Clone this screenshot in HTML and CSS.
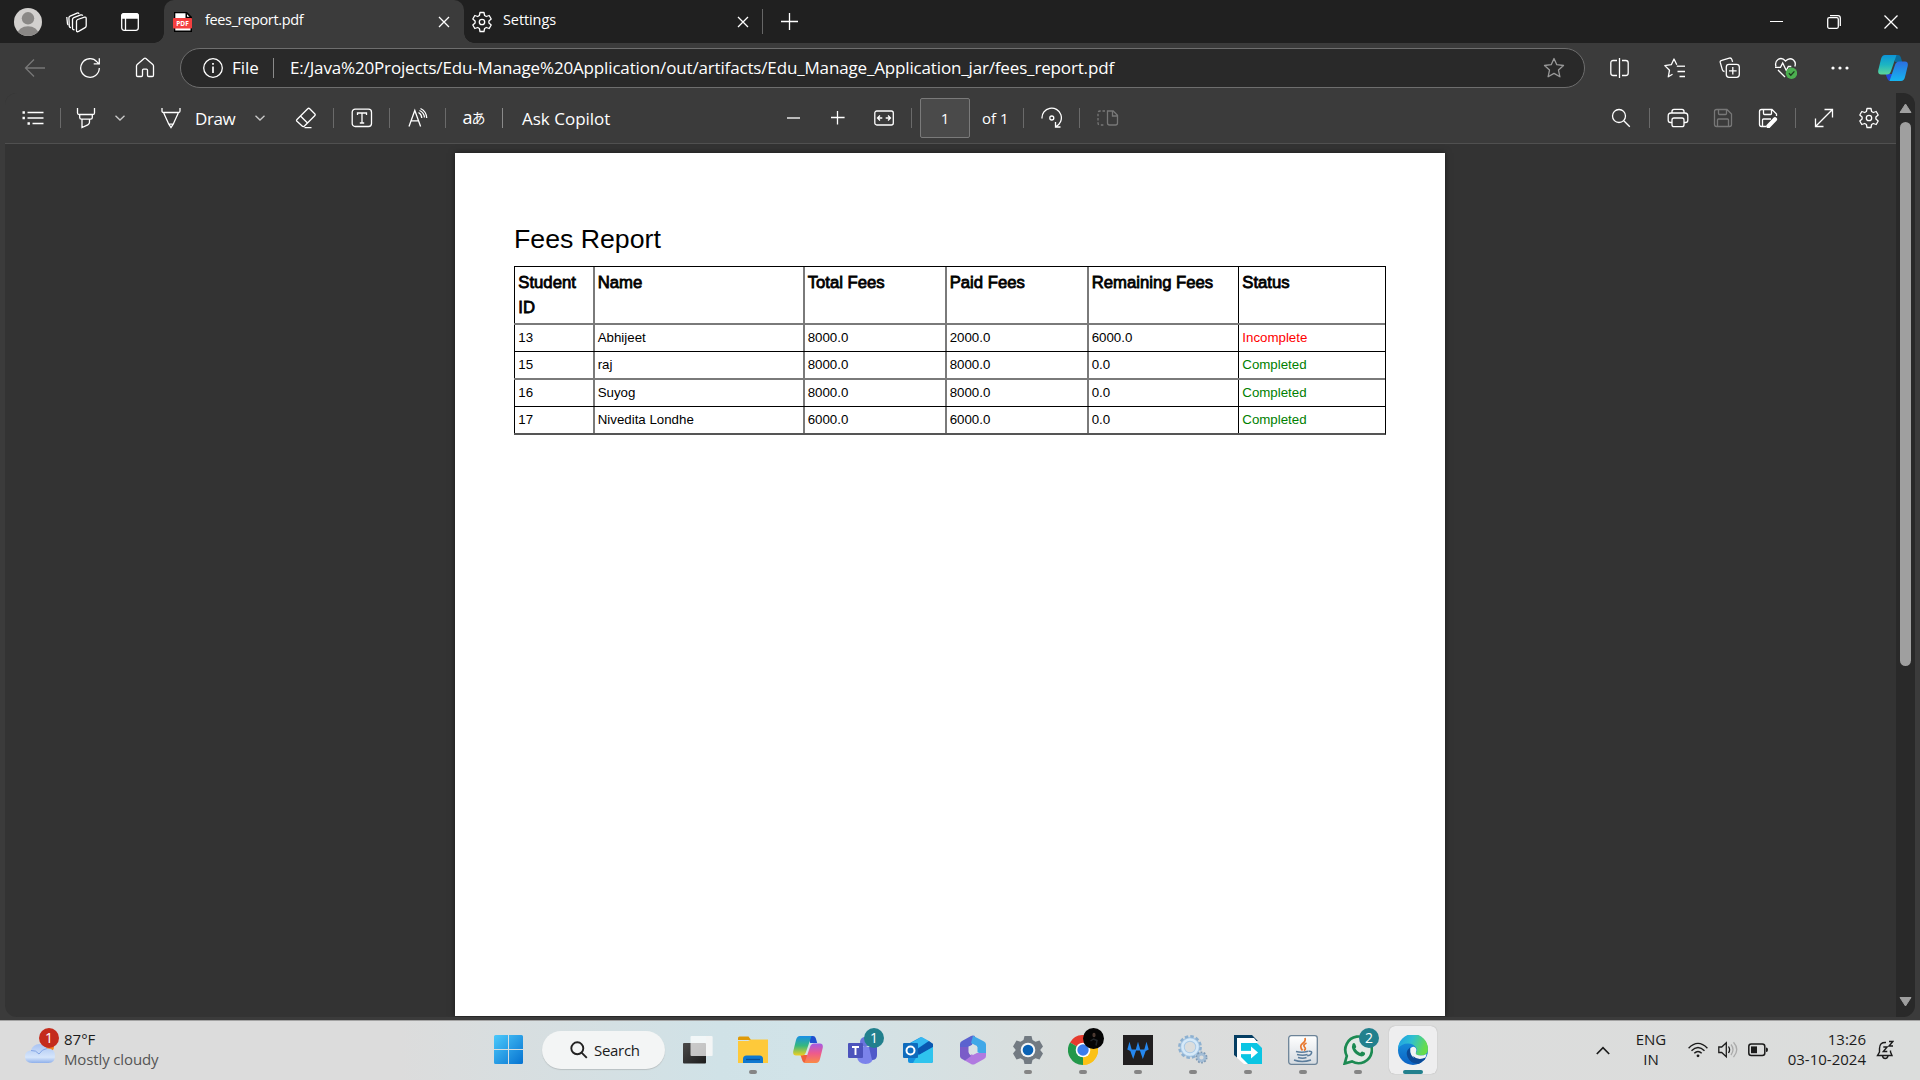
FILE: index.html
```html
<!DOCTYPE html>
<html lang="en">
<head>
<meta charset="utf-8">
<title>fees_report.pdf</title>
<link rel="stylesheet" href="styles.css">
</head>
<body>
<div class="desktop">
  <div class="browser">
    <header class="tabbar">
      <span class="cell"><svg width="28" height="28" viewBox="0 0 28 28"><clipPath id="av"><circle cx="14" cy="14" r="14"/></clipPath><g clip-path="url(#av)"><rect width="28" height="28" fill="#d2d0ce"/><circle cx="14" cy="10.3" r="6.2" fill="#8a8886"/><ellipse cx="14" cy="26" rx="10.5" ry="7.8" fill="#8a8886"/></g></svg></span>
      <span class="cell"><svg class="ico" width="22" height="22" viewBox="0 0 22 22"><path d="M10.500 10.300q0-1.300 1.200-1.800l6.800-2.300q1.700-.5 1.700 1.200v7.400q0 1.200-1.100 1.800l-6.500 3.800q-2.100 1-2.100-1z"/><path d="M8.500 18.700q-1.800.3-2-1.500V8.600q0-1.400 1.300-1.900l7-2.800q1.300-.4 2 .8M5 16.500q-1.500.2-1.700-1.200L2.900 6.900q0-1.300 1.200-1.800l7-3q1.300-.5 2 .7"/><path d="M2.500 14q-.8-.3-1-1.200L.8 6"/></svg></span>
      <span class="cell"><svg class="ico" width="20" height="20" viewBox="0 0 20 20"><rect x="1.700" y="1.700" width="16.600" height="16.600" rx="2.500"/><path d="M1.700 6V4q0-2.300 2.300-2.300h12q2.300 0 2.300 2.300v2z" fill="#fff"/><path d="M5.500 6v12"/></svg></span>
      <div class="tab tab-active">
        <svg class="tab-icon" width="20" height="20" viewBox="0 0 20 20"><path d="M1 0h13l5 5v15H1z" fill="#000"/><path d="M2.300 1.300h11L17.500 5.500v13H2.300z" fill="#fff"/><path d="M12.500 0 19 6h-6.500z" fill="#000"/><path d="m14 2.200 2.500 2.500H14z" fill="#fff"/><rect y="6" width="19" height="10.500" rx=".8" fill="#f43f3f"/><text x="9.500" y="13.900" class="pdf-label" text-anchor="middle">PDF</text></svg>
        <span class="tab-title t-file">fees_report.pdf</span>
        <svg class="ico tab-close" width="12" height="12" viewBox="0 0 12 12"><path d="m1 1 10 10M11 1 1 11"/></svg>
      </div>
      <div class="tab">
        <svg class="ico tab-icon" width="22" height="22" viewBox="0 0 22 22"><path d="M9 1.500h4l.6 3 1.700 1 2.900-1 2 3.500-2.300 2v2l2.300 2-2 3.500-2.900-1-1.700 1-.6 3H9l-.6-3-1.700-1-2.900 1-2-3.500 2.300-2v-2l-2.300-2 2-3.500 2.900 1 1.700-1z" stroke-linejoin="round"/><circle cx="11" cy="11" r="2.700"/></svg>
        <span class="tab-title t-settings">Settings</span>
        <svg class="ico tab-close" width="12" height="12" viewBox="0 0 12 12"><path d="m1 1 10 10M11 1 1 11"/></svg>
      </div>
      <span class="tab-sep"></span>
      <span class="cell"><svg class="ico" width="18" height="18" viewBox="0 0 18 18"><path d="M8.500 0v17M0 8.500h17"/></svg></span>
      <span></span>
      <span class="cell"><svg class="ico crisp" width="14" height="14" viewBox="0 0 14 14"><path d="M0 6.500h13"/></svg></span>
      <span class="cell"><svg class="ico" width="14" height="14" viewBox="0 0 14 14"><rect x=".7" y="2.700" width="10.600" height="10.600" rx="1.500"/><path d="M3 .7h8q2.300 0 2.300 2.300v8"/></svg></span>
      <span class="cell"><svg class="ico" width="14" height="14" viewBox="0 0 14 14"><path d="m.5.500 13 13M13.500.5l-13 13"/></svg></span>
    </header>

    <nav class="navbar">
      <span class="cell"><svg class="ico dim" width="22" height="20" viewBox="0 0 22 20"><path d="M21 10H1.500M10 1.500 1.500 10l8.500 8.500"/></svg></span>
      <span class="cell"><svg class="ico" width="22" height="22" viewBox="0 0 22 22"><path d="M20.300 11A9.300 9.300 0 1 1 18 4.900l2 2M20.300 1.300v5.600h-5.600"/></svg></span>
      <span class="cell"><svg class="ico" width="20" height="21" viewBox="0 0 20 21"><path d="M1.500 9q0-.9.700-1.500l6.900-6q.9-.8 1.800 0l6.900 6q.7.600.7 1.500v9.300q0 1.200-1.200 1.200h-3.600q-1.200 0-1.200-1.200v-5.100q0-1-1-1H8.500q-1 0-1 1v5.100q0 1.200-1.200 1.200H2.700q-1.200 0-1.200-1.200z"/></svg></span>
      <span></span>
      <div class="address">
        <svg class="ico" width="20" height="20" viewBox="0 0 20 20"><circle cx="10" cy="10" r="9.300"/><path d="M10 8.500V15M10 5v1.700" stroke-width="1.700"/></svg>
        <span class="url-kind">File</span>
        <span class="url-sep"></span>
        <span class="url">E:/Java%20Projects/Edu-Manage%20Application/out/artifacts/Edu_Manage_Application_jar/fees_report.pdf</span>
        <svg class="ico star" width="22" height="22" viewBox="0 0 22 22"><path d="m11 1.500 2.800 6.200 6.700.8-5 4.600 1.400 6.700-5.900-3.400-5.900 3.400 1.400-6.700-5-4.600 6.700-.8z" stroke-linejoin="round"/></svg>
      </div>
      <span></span>
      <span class="cell"><svg class="ico" width="20" height="20" viewBox="0 0 20 20"><path d="M9.500 0v20M7 2.500H3.200Q.8 2.500.8 5v10q0 2.500 2.400 2.500H7M12 2.500h3.800q2.400 0 2.400 2.500v10q0 2.500-2.400 2.500H12"/></svg></span>
      <span class="cell"><svg class="ico" width="22" height="22" viewBox="0 0 22 22"><path d="m8.500 17.200-4.200 2.600 1.200-6.600L.8 8.600l6.500-.9L10 2l2.800 5.700M13.500 14.500h7.500M15.500 19.500H21" stroke-linejoin="round"/><path d="M12.800 9.200H21"/></svg></span>
      <span class="cell"><svg class="ico" width="22" height="22" viewBox="0 0 22 22"><path d="M5.500 14.500q-1.700 0-2.100-1.600L1.300 5.700q-.5-1.900 1.400-2.400l7.600-2.200q1.900-.5 2.500 1.300l.8 2.500"/><rect x="7.300" y="7.300" width="13" height="13" rx="2.700"/><path d="M13.800 10v7.600M10 13.800h7.600"/></svg></span>
      <span class="cell"><svg class="ico" width="24" height="24" viewBox="0 0 24 24"><path d="M3 10.500Q1.500 6 5 3.500q4-2.500 7.500 1.500Q16.500 1 20.500 4q2.800 2.700 1.300 6.500M2 11.300h5.500L9.700 7l3.600 7.500 2-4h3M5 14l7 7"/><circle cx="18.500" cy="17.200" r="5.700" fill="#4caf50" stroke="none"/><path d="m15.900 17.300 1.900 1.900 3.600-3.800" stroke="#1d3a1e"/></svg></span>
      <span class="cell"><svg width="18" height="6" viewBox="0 0 18 6" fill="#fff"><circle cx="2" cy="3" r="1.600"/><circle cx="9" cy="3" r="1.600"/><circle cx="16" cy="3" r="1.600"/></svg></span>
      <span class="cell"><svg width="30" height="28" viewBox="0 0 30 28"><defs><linearGradient id="c1" x1="0" y1="0" x2="0" y2="1"><stop offset="0" stop-color="#0c94d8"/><stop offset=".5" stop-color="#1cb5c2"/><stop offset="1" stop-color="#5ed69a"/></linearGradient><linearGradient id="c2" x1="0" y1="0" x2="0" y2="1"><stop offset="0" stop-color="#2b6fe0"/><stop offset="1" stop-color="#16b5f0"/></linearGradient></defs><path d="M15 1h5q2 0 2.700 2l1.500 5h-7z" fill="#0a6b9c"/><path d="M7.500 20h7l3 7h-5q-2.300 0-3-2z" fill="#2347d9"/><path d="M7 1h11.500L13 17q-1 3.500-4 3.500H3Q-.5 20.500.3 16L3 5q1-4 4-4z" fill="url(#c1)"/><path d="M23 27H11.500L17 11q1-3.500 4-3.500h6q3.500 0 2.700 4.500L27 23q-1 4-4 4z" fill="url(#c2)"/></svg></span>
    </nav>

    <main class="viewer">
      <div class="viewer-main">
        <div class="toolbar">
          <span class="cell"><svg class="ico" width="22" height="16" viewBox="0 0 22 16"><path d="M5.500 2.500h16M5.500 8h16M10.500 13.500h11"/><path d="M.5 2.500h2.400M.5 8h2.400M5.500 13.500h2.400" stroke-width="2.400"/></svg></span>
          <i class="sep"></i>
          <span class="cell"><svg class="ico" width="20" height="22" viewBox="0 0 20 22"><path d="M1.500 1v5q0 1.500 1.500 1.500h14q1.500 0 1.500-1.500V1M3.700 7.500v3q0 1.700 1.700 1.700h9.200q1.700 0 1.700-1.700v-3M6 12.300v8.200l5.800-2.700q1.700-.8 1.700-2.500v-3"/></svg></span>
          <span class="cell"><svg class="ico thin" width="10" height="6" viewBox="0 0 10 6"><path d="m.5.700 4.500 4.300L9.500.7"/></svg></span>
          <span></span>
          <span class="cell"><svg class="ico" width="22" height="22" viewBox="0 0 22 22"><path d="M2 1v3q0 1.500 1.500 1.500h15Q20 5.500 20 4V1M3.500 5.500l5.300 11.700L11 20.500l2.200-3.300 5.300-11.700M8.800 17.200h4.400"/></svg></span>
          <span class="tb-text t-draw">Draw</span>
          <span class="cell"><svg class="ico thin" width="10" height="6" viewBox="0 0 10 6"><path d="m.5.700 4.500 4.300L9.500.7"/></svg></span>
          <span></span>
          <span class="cell"><svg class="ico" width="22" height="22" viewBox="0 0 22 22"><path d="m2 12.500 10.700-10.700q1-1 2 0l5 5q1 1 0 2L9.500 19q-1.200 1.200-2.400 0L2 14.300q-.9-.9 0-1.800zM5.500 9l7 7M9.500 20.700h7"/></svg></span>
          <i class="sep"></i>
          <span class="cell"><svg class="ico" width="22" height="20" viewBox="0 0 22 20"><rect x="1.200" y="1.200" width="19.300" height="17.300" rx="3"/><path d="M6.500 7V5h9v2M11 5v10M8.800 15h4.400"/></svg></span>
          <i class="sep"></i>
          <span class="cell"><svg class="ico" width="22" height="22" viewBox="0 0 22 22"><path d="m2 19.500 5.800-16 5.800 16M4.300 13.800h7M11.500 5.500q3 1.500 3.300 5.500M13.500 1.500q6 3 6.200 9.500M12.500 3.500q4.500 2 5 7"/></svg></span>
          <i class="sep"></i>
          <span class="cell translate"><span>a</span><span class="kana">あ</span></span>
          <i class="sep strong"></i>
          <span></span>
          <span class="tb-text t-ask">Ask Copilot</span>
          <span class="cell"><svg class="ico crisp" width="14" height="14" viewBox="0 0 14 14"><path d="M1 7h13" stroke="#bbb" stroke-width="2"/></svg></span>
          <span class="cell"><svg class="ico" width="14" height="14" viewBox="0 0 14 14"><path d="M6.500 0v13.600M0 6.500h13.600"/></svg></span>
          <span class="cell"><svg class="ico" width="20" height="16" viewBox="0 0 20 16"><rect x=".8" y="1" width="18.500" height="14" rx="2"/><path d="M3.800 8h4.500M6 5.500 3.500 8 6 10.500M16.200 8h-4.500M14 5.500l2.500 2.500-2.500 2.500"/></svg></span>
          <span></span>
          <i class="sep"></i>
          <span></span>
          <span class="page-input">1</span>
          <span></span>
          <span class="tb-text t-of">of 1</span>
          <i class="sep"></i>
          <span class="cell"><svg class="ico" width="22" height="22" viewBox="0 0 22 22"><path d="M1 11.500a9.700 9.700 0 1 1 14 8M19.500 20h-5v-5"/><circle cx="10.800" cy="11" r="2"/></svg></span>
          <i class="sep"></i>
          <span class="cell"><svg class="ico dim" width="22" height="18" viewBox="0 0 22 18"><path d="M10.500 2h5.700l4.300 4.300V14q0 2-2 2h-6q-2 0-2-2zM15.500 2v5h5"/><path d="M8 2H3Q1 2 1 4v10q0 2 2 2h5" stroke-dasharray="2.500 1.800"/></svg></span>
          <span></span>
          <span class="cell"><svg class="ico" width="20" height="20" viewBox="0 0 20 20"><circle cx="8" cy="8" r="6.500"/><path d="m12.800 12.800 6 6"/></svg></span>
          <i class="sep"></i>
          <span></span>
          <span class="cell"><svg class="ico" width="22" height="20" viewBox="0 0 22 20"><path d="M5 5V3.500Q5 1.300 7 1.300h8q2 0 2 2.200V5M5 14.500H3.500q-2.300 0-2.300-2.300V8Q1.200 5 4 5h14q2.800 0 2.800 3v4.200q0 2.300-2.300 2.300H17"/><rect x="5" y="10" width="12" height="8.700" rx="2"/></svg></span>
          <span class="cell"><svg class="ico dim" width="20" height="20" viewBox="0 0 20 20"><path d="M1.500 3.500q0-2 2-2H14l4.500 4.500v10.500q0 2-2 2h-13q-2 0-2-2zM5.500 1.500v4q0 1 1 1h6q1 0 1-1v-4M4.500 18v-6q0-1 1-1h9q1 0 1 1v6"/></svg></span>
          <span class="cell"><svg class="ico" width="20" height="20" viewBox="0 0 20 20"><path d="M8 18.500H3.500q-2 0-2-2v-13q0-2 2-2H14l4.500 4.500v2M5.500 1.500v4q0 1 1 1h6q1 0 1-1v-4M4.500 18v-6q0-1 1-1H13"/><path d="m10.300 18.300 6.700-7" stroke-width="4.200" stroke-linecap="round"/></svg></span>
          <span></span>
          <i class="sep"></i>
          <span></span>
          <span class="cell"><svg class="ico" width="20" height="20" viewBox="0 0 20 20"><path d="M2 18 18 2M10.500 1.500h8v8M1.500 10.500v8h8"/></svg></span>
          <span class="cell"><svg class="ico" width="22" height="22" viewBox="0 0 22 22"><path d="M9 1.500h4l.6 3 1.700 1 2.900-1 2 3.500-2.300 2v2l2.300 2-2 3.500-2.900-1-1.700 1-.6 3H9l-.6-3-1.700-1-2.900 1-2-3.500 2.300-2v-2l-2.300-2 2-3.500 2.900 1 1.700-1z" stroke-linejoin="round"/><circle cx="11" cy="11" r="2.700"/></svg></span>
        </div>
        <div class="canvas">
          <article class="page">
            <h1>Fees Report</h1>
            <div class="report">
              <div class="row head"><span>Student ID</span><span>Name</span><span>Total Fees</span><span>Paid Fees</span><span>Remaining Fees</span><span>Status</span></div>
              <div class="row soft"><span>13</span><span>Abhijeet</span><span>8000.0</span><span>2000.0</span><span>6000.0</span><span class="bad">Incomplete</span></div>
              <div class="row"><span>15</span><span>raj</span><span>8000.0</span><span>8000.0</span><span>0.0</span><span class="good">Completed</span></div>
              <div class="row soft"><span>16</span><span>Suyog</span><span>8000.0</span><span>8000.0</span><span>0.0</span><span class="good">Completed</span></div>
              <div class="row"><span>17</span><span>Nivedita Londhe</span><span>6000.0</span><span>6000.0</span><span>0.0</span><span class="good">Completed</span></div>
            </div>
          </article>
        </div>
      </div>
      <div class="scrollbar">
        <svg width="13" height="11" viewBox="0 0 13 11"><path d="M6.500 1 12 9.500H1z" fill="#9f9f9f" stroke="#9f9f9f" stroke-linejoin="round"/></svg>
        <span class="thumb"></span>
        <svg class="down" width="13" height="11" viewBox="0 0 13 11"><path d="M6.500 10 12 1.500H1z" fill="#9f9f9f" stroke="#9f9f9f" stroke-linejoin="round"/></svg>
      </div>
    </main>
  </div>

  <footer class="taskbar">
    <div class="weather">
      <svg width="36" height="38" viewBox="0 0 36 38"><defs><linearGradient id="cl" x1="0" y1="0" x2="0" y2="1"><stop offset="0" stop-color="#a9c3f2"/><stop offset=".7" stop-color="#d6e6fb"/><stop offset="1" stop-color="#8fb0ea"/></linearGradient></defs><circle cx="24" cy="20" r="5" fill="#f58220"/><path d="M7 36q-7 0-7-6.500Q0 24 6 23.500 8 17 14.500 17q5 0 7.500 4.500 8-.5 8 7.500 0 7-6.500 7z" fill="url(#cl)"/><path d="M6 23.500q5-.5 8 3.500 3-5 8-5.500" fill="none" stroke="#83a6e6"/></svg>
      <span class="badge red">1</span>
      <div class="weather-text"><span>87°F</span><span class="condition">Mostly cloudy</span></div>
    </div>

    <div class="apps">
      <span class="app start"><svg width="30" height="30" viewBox="0 0 30 30"><defs><linearGradient id="win" x1="0" y1="0" x2="1" y2="1"><stop offset="0" stop-color="#4cc9fb"/><stop offset="1" stop-color="#0672d0"/></linearGradient></defs><path d="M1.500 0H14v14H0V1.500Q0 0 1.500 0zM15 0h12.500Q29 0 29 1.500V14H15zM0 15h14v14H1.500Q0 29 0 27.500zM15 15h14v12.500q0 1.500-1.500 1.500H15z" fill="url(#win)"/></svg></span>
      <div class="search"><svg width="18" height="18" viewBox="0 0 18 18" fill="none" stroke="#222" stroke-width="1.900"><circle cx="7.300" cy="7.300" r="6"/><path d="m11.600 11.600 5.200 5.200"/></svg><span class="t-search">Search</span></div>
      <span class="app"><svg width="30" height="30" viewBox="0 0 30 30"><defs><linearGradient id="tv" x1="0" y1="0" x2="1" y2="1"><stop offset="0" stop-color="#4a4a4a"/><stop offset="1" stop-color="#1c1c1c"/></linearGradient></defs><rect x="0" y="8" width="23" height="20.500" rx="1" fill="url(#tv)"/><rect x="7.500" y="1" width="22" height="20" rx="1" fill="#fff" opacity=".72"/><path d="M23 1h5.500q1 0 1 1v19H23z" fill="#f4f4f4" opacity=".6"/></svg></span>
      <span class="app run"><svg width="30" height="30" viewBox="0 0 30 30"><path d="M0 3q0-1.500 1.500-1.500h9L13 5H0z" fill="#e09a08"/><path d="M0 6h10l3-1.500h17V28H0z" fill="#fec93a"/><path d="M5 28v-4q0-3.500 3.500-3.500h13q3.500 0 3.500 3.500v4z" fill="#0f78d0"/><path d="M8 24.500h14" stroke="#0a4f96" stroke-width="1.300"/></svg></span>
      <span class="app"><svg width="30" height="30" viewBox="0 0 30 30"><defs><linearGradient id="cp1" x1="0" y1="0" x2="0" y2="1"><stop offset="0" stop-color="#188fe8"/><stop offset=".5" stop-color="#35b87e"/><stop offset="1" stop-color="#f1cf20"/></linearGradient><linearGradient id="cp2" x1="0" y1="0" x2="0" y2="1"><stop offset="0" stop-color="#a45be5"/><stop offset=".5" stop-color="#ee5a8d"/><stop offset="1" stop-color="#fa8a45"/></linearGradient></defs><path d="M15 1h5q2 0 2.700 2l1.500 5h-7z" fill="#1e50d0"/><path d="M7.500 20h7l3 8h-5q-2.300 0-3-2z" fill="#f0603a"/><path d="M7 1h11.500L13 17q-1 3.500-4 3.500H3Q-.5 20.500.3 16L3 5q1-4 4-4z" fill="url(#cp1)"/><path d="M23 28H11.500L17 12q1-3.500 4-3.500h6q3.500 0 2.700 4.500L27 24q-1 4-4 4z" fill="url(#cp2)"/></svg></span>
      <span class="app"><svg width="30" height="30" viewBox="0 0 30 30"><circle cx="17" cy="7" r="5" fill="#6a74dd"/><path d="M9 12h16v10q0 7-7.500 7T9 22z" fill="#7b83eb"/><path d="M21 12h8v8q0 5-5 5z" fill="#5059c9"/><rect x="0" y="8" width="15" height="15" rx="1" fill="#4b53bc"/><path d="M4 12h7M7.500 12v8" stroke="#fff" stroke-width="1.900"/></svg><span class="badge teal">1</span></span>
      <span class="app"><svg width="30" height="30" viewBox="0 0 30 30"><path d="M5 9 17 2.500q1-.5 2 0L30 9v17q0 2-2 2H7q-2 0-2-2z" fill="#1490df"/><path d="m8 8 9.500-5.500q1-.5 2 0L26 6 12 15z" fill="#35b8f1"/><path d="m13 15 13-9 4 3v3L16 20z" fill="#0a57b0"/><path d="m14 21 16-9v14q0 2-2 2H10z" fill="#2fc4ee"/><rect x="0" y="8" width="15" height="15" rx="1" fill="#0f6cbd"/><circle cx="7.500" cy="15.500" r="4" fill="none" stroke="#fff" stroke-width="2"/></svg></span>
      <span class="app"><svg width="30" height="30" viewBox="0 0 30 30"><path d="M2 9q0-2 2-3l9-5q2-1 4 0l-3 9-4 2v8l-3 4-5-3z" fill="#5b62cf"/><path d="m15 .7 11 5.800q2 1 2 3V21L19 17v-6l-6-3z" fill="#40a8e8"/><path d="M28 18v3q0 2-2 3l-9 5q-2 1-4 0l-7-4 8-6 5-1z" fill="#b07ae0"/><path d="M2 12v9q0 2 2 3l3 1.500 6-4.500-2-2.500V12z" fill="#7a5cc8"/><path d="M15 9.500 19.500 12v5.500L15 20l-4.500-2.500V12z" fill="#dae2e4"/></svg></span>
      <span class="app run"><svg width="30" height="30" viewBox="0 0 30 30"><path d="M11.500 1h7l1 4 3 1.700 4-1.200L30 11.500l-2.800 3.500L30 18.500l-3.500 6-4-1.200-3 1.700-1 4h-7l-1-4-3-1.700-4 1.200-3.500-6L2.800 15 0 11.500l3.500-6 4 1.200 3-1.700z" fill="#727a82"/><circle cx="15" cy="15" r="7.300" fill="#f5f7f8"/><circle cx="15" cy="15" r="5.300" fill="#0a62b5"/></svg></span>
      <span class="app run"><svg width="30" height="30" viewBox="0 0 30 30"><path d="M15 15 2 7.500A15 15 0 0 1 28 7.500z" fill="#e63b2e"/><path d="M15 15 28 7.500A15 15 0 0 1 15 30z" fill="#fbc116"/><path d="M15 15v15A15 15 0 0 1 2 7.500z" fill="#22984a"/><path d="M15 8h13.300A15 15 0 0 1 15 30l6-11.500z" fill="#fbc116"/><circle cx="15" cy="15" r="7.300" fill="#fff"/><circle cx="15" cy="15" r="5.700" fill="#3b7ded"/></svg><span class="badge photo"><svg width="21" height="21" viewBox="0 0 21 21"><ellipse cx="11" cy="7" rx="1.600" ry="2.200" fill="#4d3a32"/><path d="m7.500 13 3-2 3.500 1.500-1 5" fill="none" stroke="#22262a" stroke-width="1.500"/></svg></span></span>
      <span class="app run"><svg width="30" height="30" viewBox="0 0 30 30"><rect width="30" height="30" fill="#211f20"/><path d="M4.300 14.500 6.500 6.800l2.200 7.700h4.100L15 6.800l2.200 7.700h4.100l2.200-7.700 2.200 7.700-3 1.500-2.900 8-2.900-8.500h-3.800L10.200 24l-2.900-8z" fill="#2587ee"/></svg></span>
      <span class="app run"><svg width="30" height="30" viewBox="0 0 30 30"><circle cx="12" cy="12" r="7.800" fill="none" stroke="#a9c9e6" stroke-width="5"/><circle cx="12" cy="12" r="10.700" fill="none" stroke="#8db0d0" stroke-width="2.400" stroke-dasharray="3.500 2.100"/><circle cx="12" cy="12" r="7.500" fill="none" stroke="#d6e9f8" stroke-width="2.600"/><circle cx="23.500" cy="22.500" r="3.500" fill="none" stroke="#a3bdd6" stroke-width="2.800"/><circle cx="23.500" cy="22.500" r="5.200" fill="none" stroke="#7d99b5" stroke-width="1.600" stroke-dasharray="1.800 1.470"/></svg></span>
      <span class="app run"><svg width="30" height="30" viewBox="0 0 30 30"><path d="M1 0h18l6 6H7v19l-6-5z" fill="#053e63"/><path d="M4 3h17l4 5v21H11l-7-6z" fill="#fff"/><path d="M8 8h16l5 5v16H15l-7-7z" fill="#0bc5e3"/><path d="M8 17.500h14" stroke="#fff" stroke-width="3.300"/><path d="m18 11.500 7 6-7 6z" fill="#fff"/></svg></span>
      <span class="app run"><svg width="30" height="30" viewBox="0 0 30 30"><defs><linearGradient id="jv" x1="0" y1="0" x2="0" y2="1"><stop offset="0" stop-color="#fff"/><stop offset="1" stop-color="#d5dbe1"/></linearGradient></defs><rect x=".7" y=".7" width="28.600" height="28.600" rx="2.500" fill="url(#jv)" stroke="#6c8398" stroke-width="1.300"/><path d="M17 3q1 3-2.500 5.500t0 7M18.500 8q-4 2-2 4t-.5 3.500" fill="none" stroke="#e8772e" stroke-width="1.700"/><path d="M8 16.500q6 1.500 12-.3M9 19.500q6 1.500 10.500 0M10 22.500q5 1.300 8.500 0M6 25q8 3 17 0M20.500 16.300q4-.5 3 2t-4.300 2.500" fill="none" stroke="#5c7d9c" stroke-width="1.500"/></svg></span>
      <span class="app run"><svg width="30" height="30" viewBox="0 0 30 30"><path d="M1.700 28.500 3.800 21A13.300 13.300 0 1 1 9 26.400z" fill="#e4e9e6" stroke="#1c8a52" stroke-width="2.700"/><path d="M9.500 9q1.500-2 2.700 0l1 2.500q.2.800-1 2 2 3.300 5 4.500 1.300-1.800 2-1.500l2.800 1.300q.7 2-1.500 3.200-3 1.500-7.500-2Q7.500 14 9.500 9z" fill="#1c8a52"/></svg><span class="badge teal">2</span></span>
      <span class="app run active"><svg width="30" height="30" viewBox="0 0 30 30"><defs><linearGradient id="e1" x1="0" y1="0" x2="1" y2=".3"><stop offset="0" stop-color="#1e9be8"/><stop offset=".5" stop-color="#2fc0d0"/><stop offset="1" stop-color="#66dc4c"/></linearGradient><linearGradient id="e2" x1="0" y1="0" x2="0" y2="1"><stop offset="0" stop-color="#1b9ae0"/><stop offset="1" stop-color="#0b62c4"/></linearGradient></defs><circle cx="15" cy="15" r="15" fill="url(#e2)"/><path d="M0 14A15 15 0 0 1 30 14q0 6.500-7 6.500-5.500 0-5.300-2.500 1.800-2 .8-4.500Q16 8.500 10 8.500 3 8.500 0 14z" fill="url(#e1)"/><path d="M12 12.500q-5 4-2.500 9.500Q13 29.500 21 28.700q4-2 6-5.200-4.500 2-9 .5-6.500-2.500-6-11.500z" fill="#0c4a96"/><path d="M12.300 13.500q2.500-3 5.500-.5 1.500 2 0 5-.5 2 5 2.600 3 0 5.700-1.600-.3 2.500-1.500 4.500-4.500 2-9 .5-6.500-2.800-5.700-10.500z" fill="#f1f3f4"/><path d="M15 21q5 5 12.800 1.500L26.500 25q-5 2-9.500 0z" fill="#0c4a96"/></svg></span>
    </div>

    <div class="tray">
      <span class="cell"><svg width="14" height="9" viewBox="0 0 14 9" fill="none" stroke="#1b1b1b" stroke-width="1.700"><path d="m.8 8 6.200-6.300L13.200 8"/></svg></span>
      <span class="lang"><span>ENG</span><span>IN</span></span>
      <span class="cell"><svg width="20" height="16" viewBox="0 0 20 16" fill="none" stroke="#1b1b1b" stroke-width="1.400"><path d="M.6 6.200q9.400-9.600 18.800 0M3.500 8.800q6.500-6.600 13 0M6.300 11.300q3.700-3.600 7.400 0"/><circle cx="10" cy="13.800" r="1.400" fill="#1b1b1b" stroke="none"/></svg></span>
      <span class="cell"><svg width="20" height="18" viewBox="0 0 20 18" fill="none" stroke="#1b1b1b" stroke-width="1.300"><path d="M.8 6v5.500h2.900l4.600 4.200V1.800L3.700 6zM10.500 5.500q2.200 3.200 0 6.500"/><path d="M13 3.500q4 5 0 10.500M15.500 1.300q6.500 7.200 0 14.900" stroke="#aaa"/></svg></span>
      <span class="cell"><svg width="20" height="14" viewBox="0 0 20 14"><rect x=".8" y="1" width="16" height="11.500" rx="2.500" fill="none" stroke="#1b1b1b" stroke-width="1.500"/><rect x="3" y="3.400" width="6" height="6.800" fill="#1b1b1b"/><path d="M18 4.500q2 0 2 2.300t-2 2.200z" fill="#1b1b1b"/></svg></span>
      <span class="clock"><span>13:26</span><span>03-10-2024</span></span>
      <span class="cell"><svg width="18" height="20" viewBox="0 0 18 20" fill="none" stroke="#1b1b1b" stroke-width="1.400"><path d="M10 2.500Q3.500 2 3.500 8.500V12L1.500 15.500H16L14.500 12v-1.500M6.500 16q.5 2.500 2.700 2.500t2.800-2.500M7.300 7h3.800l-3.800 4.500h4M13 1.500h3.800L13 6h4"/></svg></span>
    </div>
  </footer>
</div>
</body>
</html>
```
FILE: styles.css
```css
* { box-sizing: border-box; }
body {
  margin: 0;
  font-family: "Open Sans", "Noto Sans", sans-serif;
  color: #fff;
  overflow: hidden;
}
svg { display: block; flex: none; }
.desktop { width: 1920px; height: 1080px; display: flex; flex-direction: column; }
.browser { height: 1020px; display: flex; flex-direction: column; background: #3b3b3b; }
.cell { display: flex; align-items: center; justify-content: center; }
.ico { fill: none; stroke: #fff; stroke-width: 1.3; stroke-linecap: butt; }
.thin { stroke: #c8c8c8; }
.dim { stroke: #777; }
.crisp { shape-rendering: crispEdges; stroke-width: 1; }

/* Tab strip */
.tabbar {
  height: 43px;
  background: #202020;
  display: grid;
  grid-template-columns: 56px 44px 64px 300px 298px 1px 53px 1fr 57px 57px 58px;
}
.tabbar > .cell:nth-child(2) { padding-right: 2px; }
.tabbar > .cell:nth-child(3) { padding-right: 4px; }
.tab { display: flex; align-items: center; padding: 0 14px 0 9px; }
.tab:not(.tab-active) { padding: 0 13px 0 7px; }
.tab-active { background: #3b3b3b; border-radius: 10px 10px 0 0; position: relative; }
.tab-active::before, .tab-active::after {
  content: "";
  position: absolute;
  bottom: 0;
  width: 10px;
  height: 10px;
}
.tab-active::before { left: -10px; background: radial-gradient(circle at 0 0, #202020 9.5px, #3b3b3b 10px); }
.tab-active::after { right: -10px; background: radial-gradient(circle at 100% 0, #202020 9.5px, #3b3b3b 10px); }
.tab-title { flex: 1; line-height: 20px; padding-bottom: 3px; margin-left: 12px; white-space: nowrap; font-size: 14.500px; }
.t-file { letter-spacing: -.36px; }
.t-settings { margin-left: 10px; letter-spacing: -.1px; }
.pdf-label { font: 700 6.500px "Open Sans", sans-serif; fill: #fff; }
.tab-sep { width: 1px; height: 25px; background: #666; align-self: center; }

/* Navigation row */
.navbar {
  height: 50px;
  padding: 0 1px 0 12px;
  display: grid;
  grid-template-columns: 46px 64px 46px 12px 1405px 7px 55px 56px 54px 56px 54px 52px;
}
.navbar > .cell { padding-bottom: 1px; }
.address {
  height: 40px;
  margin-top: 5px;
  border: 1px solid #6e6e6e;
  border-radius: 20px;
  background: #292929;
  display: flex;
  align-items: center;
  padding: 0 19px 0 22px;
  font-size: 17px;
  white-space: nowrap;
}
.url-kind { width: 41px; margin-left: 9px; padding-bottom: 2px; }
.url-sep { width: 1px; height: 20px; background: #8a8a8a; }
.url { flex: 1; margin-left: 16px; padding-bottom: 2px; letter-spacing: -.155px; }
.star { stroke: #999; }

/* Document viewer */
.viewer {
  height: 924px;
  margin: 0 5px;
  border-radius: 12px;
  overflow: hidden;
  display: flex;
  background: #333;
}
.viewer-main { flex: 1; display: flex; flex-direction: column; }
.toolbar {
  height: 51px;
  flex: none;
  background: #3b3b3b;
  border-bottom: 1px solid #505050;
  display: grid;
  align-items: center;
  grid-template-columns:
    55px 1px 50px 17px 18px 49px 55px 20px 8px 55px 1px 55px 1px 55px 1px 56px 1px
    19px 248px 45px 45px 48px 3px 1px 8px 50px 12px 41px 1px 55px 1px 56px
    1fr 56px 1px 5px 45px 45px 45px 5px 1px 5px 45px 45px 5px;
}
.sep { height: 20px; background: #6a6a6a; }
.strong { background: #8a8a8a; }
.tb-text { font-size: 17px; white-space: nowrap; }
.t-draw { letter-spacing: -.4px; }
.t-of { font-size: 15px; }
.translate { font: 18px "Open Sans", sans-serif; padding-bottom: 2px; }
.kana { font: 14px "Noto Sans CJK JP", sans-serif; margin-left: -1px; }
.page-input {
  height: 40px;
  border: 1px solid #7a7a7a;
  border-radius: 2px;
  background: #4a4a4a;
  font-size: 15px;
  line-height: 38px;
  text-align: center;
}
.canvas { flex: 1; padding: 9px 0 0 450px; }
.page {
  width: 990px;
  height: 863px;
  padding: 71px 59px 0;
  background: #fff;
  color: #000;
  box-shadow: 0 0 6px rgba(0, 0, 0, .5);
  font-family: "Liberation Sans", Arial, sans-serif;
}
.page h1 { margin: 0 0 11px; font-size: 26.700px; font-weight: 400; line-height: 31px; }
.report { width: 872px; border-right: 1px solid #000; border-bottom: 2px solid #555; font-size: 13.300px; }
.row { height: 27px; display: grid; grid-template-columns: 79px 210px 142px 142px 151px 147px; border-top: 1px solid #000; line-height: 25px; }
.row.soft { height: 28px; border-top: 2px solid #7a7a7a; line-height: 25px; }
.row span { border-left: 2px solid #7a7a7a; padding-left: 2.700px; }
.row span:first-child, .row span:last-child { border-left: 1px solid #000; padding-left: 3.300px; }
.row.head { height: 57px; font-size: 16.700px; -webkit-text-stroke: .8px #000; }
.row.head span { padding-top: 3px; }
.row .bad { color: #f00; }
.row .good { color: #008000; }

/* Scrollbar */
.scrollbar { width: 19px; background: #292929; display: flex; flex-direction: column; align-items: center; padding: 10px 0; }
.thumb { width: 11px; height: 544px; margin-top: 8px; border-radius: 6px; background: #9f9f9f; }
.down { margin-top: auto; }

/* Taskbar */
.taskbar {
  height: 60px;
  border-top: 1px solid #a3a3a3;
  background: linear-gradient(90deg, #dcdcdc 0, #dcdcdc 400px, #d0e2e7 720px, #d1e3e8 800px, #dadedd 1060px, #dcdcdc 1300px, #dbdddc);
  color: #1b1b1b;
  font-size: 15px;
  display: grid;
  grid-template-columns: 481px 965px 1fr;
}
.weather { position: relative; display: flex; padding-left: 25px; }
.weather > svg { margin-top: 6px; }
.weather-text { display: flex; flex-direction: column; line-height: 20px; margin: 8px 0 0 3px; white-space: nowrap; }
.condition { color: #555; letter-spacing: -.13px; }
.badge {
  position: absolute;
  width: 20px;
  height: 20px;
  border-radius: 50%;
  color: #fff;
  font-size: 14px;
  line-height: 20px;
  text-align: center;
}
.red { left: 39px; top: 7px; background: #c42b1c; }
.teal { left: 25px; top: 2px; background: #22808d; }
.photo { left: 24px; top: 2px; width: 21px; height: 21px; background: #050505; overflow: hidden; }
.apps { height: 58px; display: flex; align-items: center; }
.app { position: relative; width: 48px; height: 48px; margin-right: 7px; display: flex; align-items: center; justify-content: center; }
.app.start { margin-right: 0; width: 55px; padding-left: 1px; }
.run::after { content: ""; position: absolute; left: 20px; bottom: 0; width: 8px; height: 4px; border-radius: 2px; background: #858585; }
.active { background: #eeeeef; border-radius: 6px; box-shadow: 0 0 1px #999; }
.active::after { left: 14px; width: 20px; background: #22808d; }
.search {
  width: 123px;
  height: 38px;
  margin: 0 9px 0 6px;
  border-radius: 19px;
  background: #f3f5f5;
  box-shadow: 0 1px 1px #b9c0c2;
  display: flex;
  align-items: center;
  padding-left: 28px;
}
.t-search { margin-left: 6px; letter-spacing: -.3px; }
.tray { display: flex; padding-left: 150px; line-height: 20px; white-space: nowrap; }
.tray > .cell { width: 30px; height: 58px; }
.tray > .cell:first-child { width: 14px; }
.lang { width: 72px; display: flex; flex-direction: column; align-items: center; padding-top: 8px; margin: 0 -4px 0 5px; }
.clock { width: 93px; display: flex; flex-direction: column; align-items: flex-end; padding-top: 8px; margin-right: 4px; }
```
